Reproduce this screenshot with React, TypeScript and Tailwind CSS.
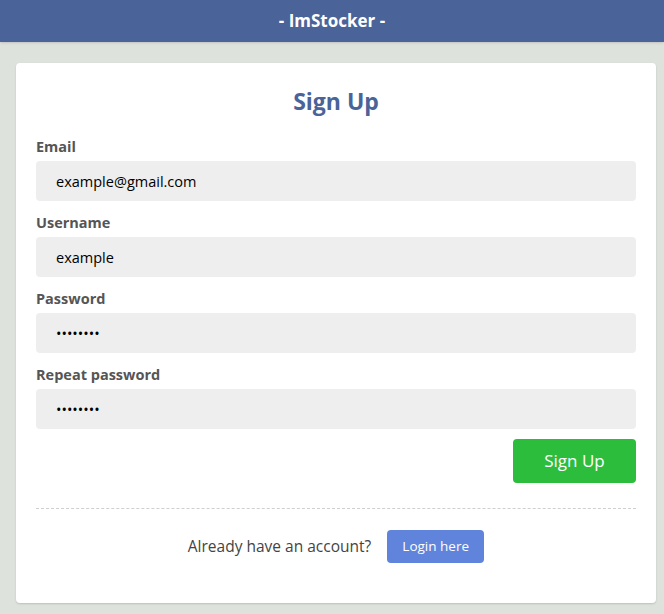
export default function App() {
  const fields = [
    { label: "Email", value: "example@gmail.com", type: "text" },
    { label: "Username", value: "example", type: "text" },
    { label: "Password", value: "password", type: "password" },
    { label: "Repeat password", value: "password", type: "password" },
  ];

  return (
    <div className="min-h-[614px] bg-[#dee2dc] font-['Open_Sans',sans-serif]">
      <header className="h-[42px] bg-[#4a6399] shadow-sm flex items-center justify-center">
        <h1 className="text-white font-bold text-[17px]">- ImStocker -</h1>
      </header>
      <div className="pl-4 pr-2 pt-[21px] pb-3">
        <div className="bg-white rounded-[4px] shadow-[0_1px_2px_rgba(0,0,0,0.15)] px-5 pt-[22px] pb-10">
          <h2 className="text-center text-[#4a6399] font-bold text-[23px] leading-[32px] mb-[18px]">Sign Up</h2>
          <form className="flex flex-col">
            {fields.map((field, key) => {
              return (
                <div key={key} className="flex flex-col mb-[10px]">
                  <label className="text-[#555] font-bold text-[14.5px] leading-[24px] mb-[2px]">{field.label}</label>
                  <input
                    type={field.type}
                    defaultValue={field.value}
                    className="h-10 bg-[#eeeeee] rounded-[4px] px-5 text-[14.5px] text-black outline-none"
                  />
                </div>
              );
            })}
            <div className="flex justify-end">
              <button type="button" className="w-[123px] h-11 bg-[#2dbd3c] text-white text-[17px] rounded-[4px]">
                Sign Up
              </button>
            </div>
          </form>
          <div className="border-t border-dashed border-[#cfcfcf] mt-[25px] mb-[21px]"></div>
          <div className="flex items-center justify-center gap-4">
            <span className="text-[#444] text-[15.5px]">Already have an account?</span>
            <button type="button" className="w-[97px] h-[33px] bg-[#6083dc] text-white text-[13.5px] rounded-[4px]">
              Login here
            </button>
          </div>
        </div>
      </div>
    </div>
  );
}
